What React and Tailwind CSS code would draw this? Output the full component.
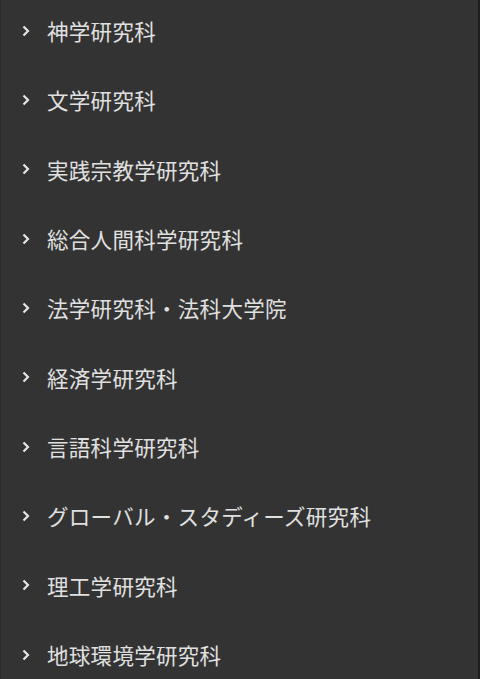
const items = [
  "神学研究科",
  "文学研究科",
  "実践宗教学研究科",
  "総合人間科学研究科",
  "法学研究科・法科大学院",
  "経済学研究科",
  "言語科学研究科",
  "グローバル・スタディーズ研究科",
  "理工学研究科",
  "地球環境学研究科",
];

function Chevron() {
  return (
    <svg width="10" height="12" viewBox="0 0 10 12" className="shrink-0">
      <path d="M2.5 1.5 L7 6 L2.5 10.5" fill="none" stroke="#e6e6e6" strokeWidth="2.2" />
    </svg>
  );
}

export default function App() {
  return (
    <div className="w-[480px] h-[679px] overflow-hidden bg-[#333333] border-l border-l-[#2a2a2a] border-r-2 border-r-[#1e1e1e] font-['Noto_Sans_CJK_JP','Noto_Sans',sans-serif]">
      <ul className="-mt-[4px]">
        {items.map((item) => (
          <li key={item} className="h-[69.33px] flex items-center pl-[20px]">
            <Chevron />
            <span className="ml-[16px] text-[21.5px] leading-none text-[#e0e0e0] tracking-[0.3px]">
              {item}
            </span>
          </li>
        ))}
      </ul>
    </div>
  );
}
